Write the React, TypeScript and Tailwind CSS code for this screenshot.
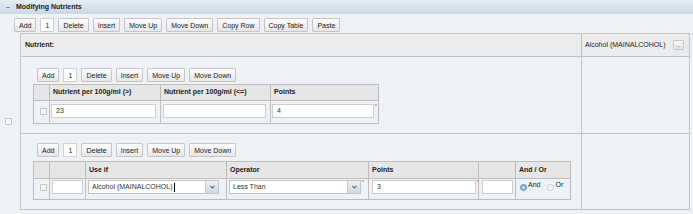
import React from "react";

function cn(...parts: Array<string | false | null | undefined>) {
  return parts.filter(Boolean).join(" ");
}

function Btn({ children }: { children: React.ReactNode }) {
  return (
    <div className="h-[14px] px-[4px] flex items-center border border-[#c5c5c5] rounded-[1px] bg-gradient-to-b from-[#fdfdfd] to-[#e6e6e6] text-[#222] leading-none whitespace-nowrap">
      {children}
    </div>
  );
}

function CountBox() {
  return (
    <div className="h-[14px] w-[14px] flex items-center justify-center border border-[#d0d0d0] bg-white leading-none">
      1
    </div>
  );
}

function Toolbar({ full }: { full?: boolean }) {
  return (
    <div className="flex items-center gap-[4px]">
      <Btn>Add</Btn>
      <CountBox />
      <Btn>Delete</Btn>
      <Btn>Insert</Btn>
      <Btn>Move Up</Btn>
      <Btn>Move Down</Btn>
      {full ? (
        <>
          <Btn>Copy Row</Btn>
          <Btn>Copy Table</Btn>
          <Btn>Paste</Btn>
        </>
      ) : null}
    </div>
  );
}

function Check() {
  return <div className="w-[7px] h-[7px] border border-[#c2c2c2] bg-[#f8f8f8] rounded-[1px]" />;
}

function Req() {
  return <span className="absolute -right-[4px] -top-[2px] text-[6px] leading-none text-[#e23b3b]">*</span>;
}

function Field({ w, value, req }: { w: string; value?: string; req?: boolean }) {
  return (
    <div className={cn("relative h-[14px] border border-[#cdcdcd] bg-white flex items-center pl-[4px] text-[#333]", w)}>
      {value}
      {req ? <Req /> : null}
    </div>
  );
}

function Select({ w, value, caret, req }: { w: string; value: string; caret?: boolean; req?: boolean }) {
  return (
    <div className={cn("relative h-[14px] border border-[#c4c4c4] bg-white flex items-center", w)}>
      <div className="flex-1 flex items-center pl-[3px] text-[#333] whitespace-nowrap">
        {value}
        {caret ? <span className="w-px h-[9px] bg-black ml-px" /> : null}
      </div>
      <div className="w-[13px] h-full border-l border-[#bfc9d4] bg-gradient-to-b from-[#eef2f6] to-[#cfd8e2] flex items-center justify-center">
        <svg width="5" height="4" viewBox="0 0 5 4">
          <path d="M0.5 0.8 L2.5 3 L4.5 0.8" fill="none" stroke="#3a6aa3" strokeWidth="1.1" />
        </svg>
      </div>
      {req ? <Req /> : null}
    </div>
  );
}

function Radio({ on }: { on?: boolean }) {
  return on ? (
    <div className="mt-[4px] w-[7px] h-[7px] rounded-full bg-[#7fa8d4] border border-[#6b95c2] flex items-center justify-center">
      <div className="w-[3px] h-[3px] rounded-full bg-[#d6e4f3]" />
    </div>
  ) : (
    <div className="mt-[4px] w-[7px] h-[7px] rounded-full border border-[#c8c8c8] bg-[#f5f5f5]" />
  );
}

const th = "bg-[#e6e6e6] border-r border-b border-[#bdbdbd] flex items-center pl-[3px] font-bold text-[#222]";
const td = "border-r border-b border-[#bdbdbd] flex items-start";

export default function App() {
  return (
    <div className="w-[693px] h-[214px] overflow-hidden bg-[#eef2f6] font-['Liberation_Sans',Arial,sans-serif] text-[7px] text-[#222]">
      {/* Section header */}
      <div className="h-[14px] flex items-center bg-gradient-to-b from-[#e7edf4] to-[#cad7e6]">
        <div className="w-[16px] flex justify-center">
          <div className="w-[4px] h-px bg-[#7d91aa]" />
        </div>
        <span className="font-bold text-[#1b1b1b]">Modifying Nutrients</span>
      </div>

      {/* Top toolbar */}
      <div className="h-[19px] pl-[14px] pt-[4px]">
        <Toolbar full />
      </div>

      <div className="flex">
        <div className="w-[20px] flex items-center pl-[5px]">
          <Check />
        </div>

        <div className="w-[670px] border border-[#c3c3c3]">
          {/* Nutrient header */}
          <div className="flex h-[23px] border-b border-[#c3c3c3] bg-[#ececec]">
            <div className="w-[561px] border-r border-[#c3c3c3] flex items-center pl-[4px] font-bold">Nutrient:</div>
            <div className="w-[107px] flex items-center pl-[3px] gap-[7px]">
              <span className="whitespace-nowrap text-[#222]">Alcohol (MAINALCOHOL)</span>
              <div className="w-[11px] h-[10px] border border-[#c6c6c6] rounded-[1px] bg-gradient-to-b from-[#fafafa] to-[#e2e2e2] flex items-end justify-center pb-[1px]">
                <span className="text-[5px] leading-none text-[#2d4f80]">...</span>
              </div>
            </div>
          </div>

          {/* Points by amount */}
          <div className="flex h-[77px] border-b border-[#c3c3c3]">
            <div className="w-[561px] border-r border-[#c3c3c3] pl-[12px] pt-[11px]">
              <div className="ml-[4px]">
                <Toolbar />
              </div>
              <div className="mt-[2px] w-[346px] grid grid-cols-[16px_111px_110px_108px] grid-rows-[16px_23px] border-l border-t border-[#bdbdbd]">
                <div className={th} />
                <div className={th}>Nutrient per 100g/ml (&gt;)</div>
                <div className={th}>Nutrient per 100g/ml (&lt;=)</div>
                <div className={th}>Points</div>

                <div className={cn(td, "pl-[6px] pt-[7px]")}>
                  <Check />
                </div>
                <div className={cn(td, "pl-[1px] pt-[3px]")}>
                  <Field w="w-[105px]" value="23" />
                </div>
                <div className={cn(td, "pl-[2px] pt-[3px]")}>
                  <Field w="w-[103px]" />
                </div>
                <div className={cn(td, "pl-[1px] pt-[3px]")}>
                  <Field w="w-[102px]" value="4" req />
                </div>
              </div>
            </div>
            <div className="w-[107px]" />
          </div>

          {/* Conditions */}
          <div className="flex h-[75px]">
            <div className="w-[561px] border-r border-[#c3c3c3] pl-[12px] pt-[9px]">
              <div className="ml-[4px]">
                <Toolbar />
              </div>
              <div className="mt-[4px] w-[538px] grid grid-cols-[16px_36px_141px_142px_110px_37px_55px] grid-rows-[17px_21px] border-l border-t border-[#bdbdbd]">
                <div className={th} />
                <div className={th} />
                <div className={th}>Use if</div>
                <div className={th}>Operator</div>
                <div className={th}>Points</div>
                <div className={th} />
                <div className={th}>And / Or</div>

                <div className={cn(td, "pl-[6px] pt-[5px]")}>
                  <Check />
                </div>
                <div className={cn(td, "pl-[2px] pt-[1px]")}>
                  <Field w="w-[31px]" />
                </div>
                <div className={cn(td, "pl-[2px] pt-[1px]")}>
                  <Select w="w-[131px]" value="Alcohol (MAINALCOHOL)" caret />
                </div>
                <div className={cn(td, "pl-[2px] pt-[1px]")}>
                  <Select w="w-[132px]" value="Less Than" req />
                </div>
                <div className={cn(td, "pl-[3px] pt-[1px]")}>
                  <Field w="w-[104px]" value="3" req />
                </div>
                <div className={cn(td, "pl-[3px] pt-[1px]")}>
                  <Field w="w-[31px]" />
                </div>
                <div className={cn(td, "pl-[4px] pt-[1px] gap-[1px]")}>
                  <Radio on />
                  <span className="mr-[6px]">And</span>
                  <Radio />
                  <span>Or</span>
                </div>
              </div>
            </div>
            <div className="w-[107px]" />
          </div>
        </div>
      </div>
    </div>
  );
}
